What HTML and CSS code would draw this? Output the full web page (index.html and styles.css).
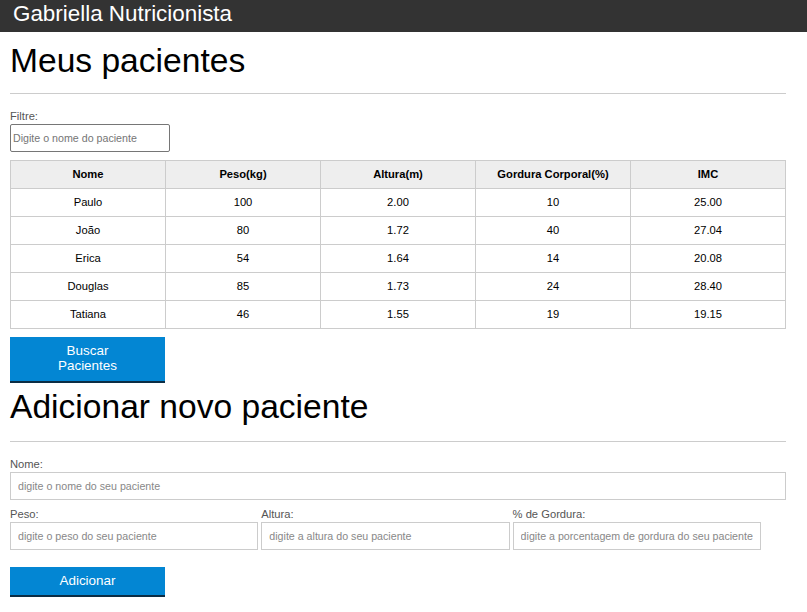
FILE: index.html
```html
<!DOCTYPE html>
<html lang="pt-BR">
<head>
<meta charset="utf-8">
<title>Gabriella Nutricionista</title>
<link rel="stylesheet" href="styles.css">
</head>
<body>
<header class="topbar">
  <span class="brand">Gabriella Nutricionista</span>
</header>
<main class="container">
  <section class="patients">
    <h1 class="section-title">Meus pacientes</h1>
    <hr class="divider divider--first">
    <label class="field-label field-label--filter" for="filtro">Filtre:</label>
    <input class="filter-input" id="filtro" type="text" placeholder="Digite o nome do paciente">
    <table class="patients-table">
      <thead>
        <tr>
          <th>Nome</th>
          <th>Peso(kg)</th>
          <th>Altura(m)</th>
          <th>Gordura Corporal(%)</th>
          <th>IMC</th>
        </tr>
      </thead>
      <tbody>
        <tr><td>Paulo</td><td>100</td><td>2.00</td><td>10</td><td>25.00</td></tr>
        <tr><td>João</td><td>80</td><td>1.72</td><td>40</td><td>27.04</td></tr>
        <tr><td>Erica</td><td>54</td><td>1.64</td><td>14</td><td>20.08</td></tr>
        <tr><td>Douglas</td><td>85</td><td>1.73</td><td>24</td><td>28.40</td></tr>
        <tr><td>Tatiana</td><td>46</td><td>1.55</td><td>19</td><td>19.15</td></tr>
      </tbody>
    </table>
    <button class="btn btn--search" type="button">Buscar Pacientes</button>
  </section>
  <section class="new-patient">
    <h1 class="section-title section-title--form">Adicionar novo paciente</h1>
    <hr class="divider divider--second">
    <form class="patient-form">
      <div class="field">
        <label class="field-label" for="nome">Nome:</label>
        <input class="form-input" id="nome" type="text" placeholder="digite o nome do seu paciente">
      </div>
      <div class="field-row">
        <div class="field field--third">
          <label class="field-label" for="peso">Peso:</label>
          <input class="form-input" id="peso" type="text" placeholder="digite o peso do seu paciente">
        </div>
        <div class="field field--third">
          <label class="field-label" for="altura">Altura:</label>
          <input class="form-input" id="altura" type="text" placeholder="digite a altura do seu paciente">
        </div>
        <div class="field field--third">
          <label class="field-label" for="gordura">% de Gordura:</label>
          <input class="form-input" id="gordura" type="text" placeholder="digite a porcentagem de gordura do seu paciente">
        </div>
      </div>
      <button class="btn btn--add" type="button">Adicionar</button>
    </form>
  </section>
</main>
</body>
</html>
```

FILE: styles.css
```css
* {
  box-sizing: border-box;
}

body {
  margin: 0;
  font-family: "Liberation Sans", Arial, sans-serif;
  color: #000;
  background: #fff;
}

.topbar {
  height: 32px;
  background: #333;
  padding: 0 13px;
}

.brand {
  display: block;
  color: #fff;
  font-size: 22.4px;
  line-height: 28px;
}

.container {
  width: 776px;
  margin-left: 10px;
}

.section-title {
  margin: 9px 0 0;
  font-size: 33.6px;
  font-weight: normal;
  line-height: 39px;
}

.section-title--form {
  margin-top: 4px;
}

.divider {
  border: 0;
  border-top: 1px solid #ccc;
  height: 0;
  margin: 13px 0 16px;
}

.divider--second {
  margin: 15px 0 16px;
}

.field-label {
  display: block;
  font-size: 11.2px;
  line-height: 13px;
  color: #555;
}

.field-label--filter {
  margin-bottom: 1px;
}

.filter-input {
  display: block;
  width: 160px;
  height: 28px;
  margin: 0;
  padding: 0 2px;
  border: 1px solid #767676;
  border-radius: 2px;
  font-family: "Liberation Sans", Arial, sans-serif;
  font-size: 10.67px;
  color: #000;
}

.filter-input::placeholder {
  color: #757575;
}

.patients-table {
  width: 776px;
  margin-top: 8px;
  border-collapse: collapse;
  table-layout: fixed;
  font-size: 11.2px;
}

.patients-table th,
.patients-table td {
  height: 28px;
  padding: 0 0 1px;
  border: 1px solid #ccc;
  text-align: center;
  vertical-align: middle;
}

.patients-table th {
  background: #eee;
  font-weight: bold;
}

.btn {
  display: block;
  width: 155px;
  margin: 0;
  padding: 7px 30px;
  border: 0;
  border-bottom: 2px solid #0b2d45;
  background: #0386d3;
  color: #fff;
  font-family: "Liberation Sans", Arial, sans-serif;
  font-size: 13.44px;
  line-height: 14.8px;
  text-align: center;
}

.btn--search {
  margin-top: 8px;
}

.btn--add {
  margin-top: 17px;
}

.patient-form {
  margin: 0;
}

.field-row {
  display: flex;
  gap: 3px;
  margin-top: 8px;
}

.field--third {
  width: 248.3px;
}

.form-input {
  display: block;
  width: 100%;
  height: 28px;
  margin: 1px 0 0;
  padding: 0 7px;
  border: 1px solid #ccc;
  border-radius: 0;
  font-family: "Liberation Sans", Arial, sans-serif;
  font-size: 10.67px;
  color: #000;
}

.form-input::placeholder {
  color: #888;
}
```
